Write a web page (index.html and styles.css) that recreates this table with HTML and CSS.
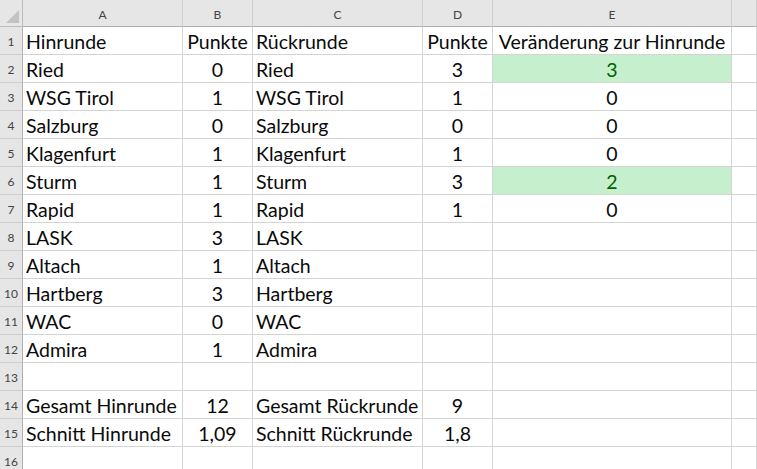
FILE: index.html
```html
<!DOCTYPE html>
<html>
<head>
<meta charset="utf-8">
<link rel="stylesheet" href="styles.css">
</head>
<body>
<div class="sheet">
  <div class="corner"><span class="tri"></span></div>
  <div class="ch">A</div><div class="ch">B</div><div class="ch">C</div><div class="ch">D</div><div class="ch">E</div><div class="ch"></div>

  <div class="rh">1</div><div class="c">Hinrunde</div><div class="c n">Punkte</div><div class="c">Rückrunde</div><div class="c n">Punkte</div><div class="c n">Veränderung zur Hinrunde</div><div class="c"></div>
  <div class="rh">2</div><div class="c">Ried</div><div class="c n">0</div><div class="c">Ried</div><div class="c n">3</div><div class="c n good">3</div><div class="c"></div>
  <div class="rh">3</div><div class="c">WSG Tirol</div><div class="c n">1</div><div class="c">WSG Tirol</div><div class="c n">1</div><div class="c n">0</div><div class="c"></div>
  <div class="rh">4</div><div class="c">Salzburg</div><div class="c n">0</div><div class="c">Salzburg</div><div class="c n">0</div><div class="c n">0</div><div class="c"></div>
  <div class="rh">5</div><div class="c">Klagenfurt</div><div class="c n">1</div><div class="c">Klagenfurt</div><div class="c n">1</div><div class="c n">0</div><div class="c"></div>
  <div class="rh">6</div><div class="c">Sturm</div><div class="c n">1</div><div class="c">Sturm</div><div class="c n">3</div><div class="c n good">2</div><div class="c"></div>
  <div class="rh">7</div><div class="c">Rapid</div><div class="c n">1</div><div class="c">Rapid</div><div class="c n">1</div><div class="c n">0</div><div class="c"></div>
  <div class="rh">8</div><div class="c">LASK</div><div class="c n">3</div><div class="c">LASK</div><div class="c n"></div><div class="c n"></div><div class="c"></div>
  <div class="rh">9</div><div class="c">Altach</div><div class="c n">1</div><div class="c">Altach</div><div class="c n"></div><div class="c n"></div><div class="c"></div>
  <div class="rh">10</div><div class="c">Hartberg</div><div class="c n">3</div><div class="c">Hartberg</div><div class="c n"></div><div class="c n"></div><div class="c"></div>
  <div class="rh">11</div><div class="c">WAC</div><div class="c n">0</div><div class="c">WAC</div><div class="c n"></div><div class="c n"></div><div class="c"></div>
  <div class="rh">12</div><div class="c">Admira</div><div class="c n">1</div><div class="c">Admira</div><div class="c n"></div><div class="c n"></div><div class="c"></div>
  <div class="rh">13</div><div class="c"></div><div class="c n"></div><div class="c"></div><div class="c n"></div><div class="c n"></div><div class="c"></div>
  <div class="rh">14</div><div class="c">Gesamt Hinrunde</div><div class="c n">12</div><div class="c">Gesamt Rückrunde</div><div class="c n">9</div><div class="c n"></div><div class="c"></div>
  <div class="rh">15</div><div class="c">Schnitt Hinrunde</div><div class="c n">1,09</div><div class="c">Schnitt Rückrunde</div><div class="c n">1,8</div><div class="c n"></div><div class="c"></div>
  <div class="rh">16</div><div class="c"></div><div class="c n"></div><div class="c"></div><div class="c n"></div><div class="c n"></div><div class="c"></div>
</div>
</body>
</html>
```
FILE: styles.css
```css
html, body {
  margin: 0;
  padding: 0;
  background: #ffffff;
  overflow: hidden;
}
.sheet {
  display: grid;
  grid-template-columns: 23px 160px 70px 170px 70px 239px 1fr;
  grid-template-rows: 27px repeat(16, 28px);
  width: 757px;
  font-family: Lato, "Open Sans", sans-serif;
}
.corner {
  position: relative;
  background: #e6e6e6;
  border-right: 1px solid #bdbdbd;
  border-bottom: 1px solid #bdbdbd;
  box-sizing: border-box;
}
.tri {
  position: absolute;
  right: 3px;
  bottom: 3px;
  width: 0;
  height: 0;
  border-left: 13px solid transparent;
  border-bottom: 13px solid #c2c2c2;
}
.ch {
  background: #e6e6e6;
  border-right: 1px solid #cfcfcf;
  border-bottom: 1px solid #b0b0b0;
  box-sizing: border-box;
  font-size: 12px;
  color: #444444;
  display: flex;
  align-items: center;
  justify-content: center;
  padding-top: 2px;
}
.rh {
  background: #e6e6e6;
  border-right: 1px solid #b0b0b0;
  border-bottom: 1px solid #cfcfcf;
  box-sizing: border-box;
  font-size: 12px;
  color: #444444;
  display: flex;
  align-items: center;
  justify-content: center;
  padding-top: 2px;
}
.c {
  border-right: 1px solid #d4d4d4;
  border-bottom: 1px solid #d4d4d4;
  box-sizing: border-box;
  font-size: 19.5px;
  color: #0a0a0a;
  display: flex;
  align-items: center;
  padding: 1px 0 0 3px;
  white-space: nowrap;
  overflow: visible;
}
.n {
  justify-content: center;
  padding-left: 0;
}
.good {
  background: #c6efce;
  color: #006100;
}
```
